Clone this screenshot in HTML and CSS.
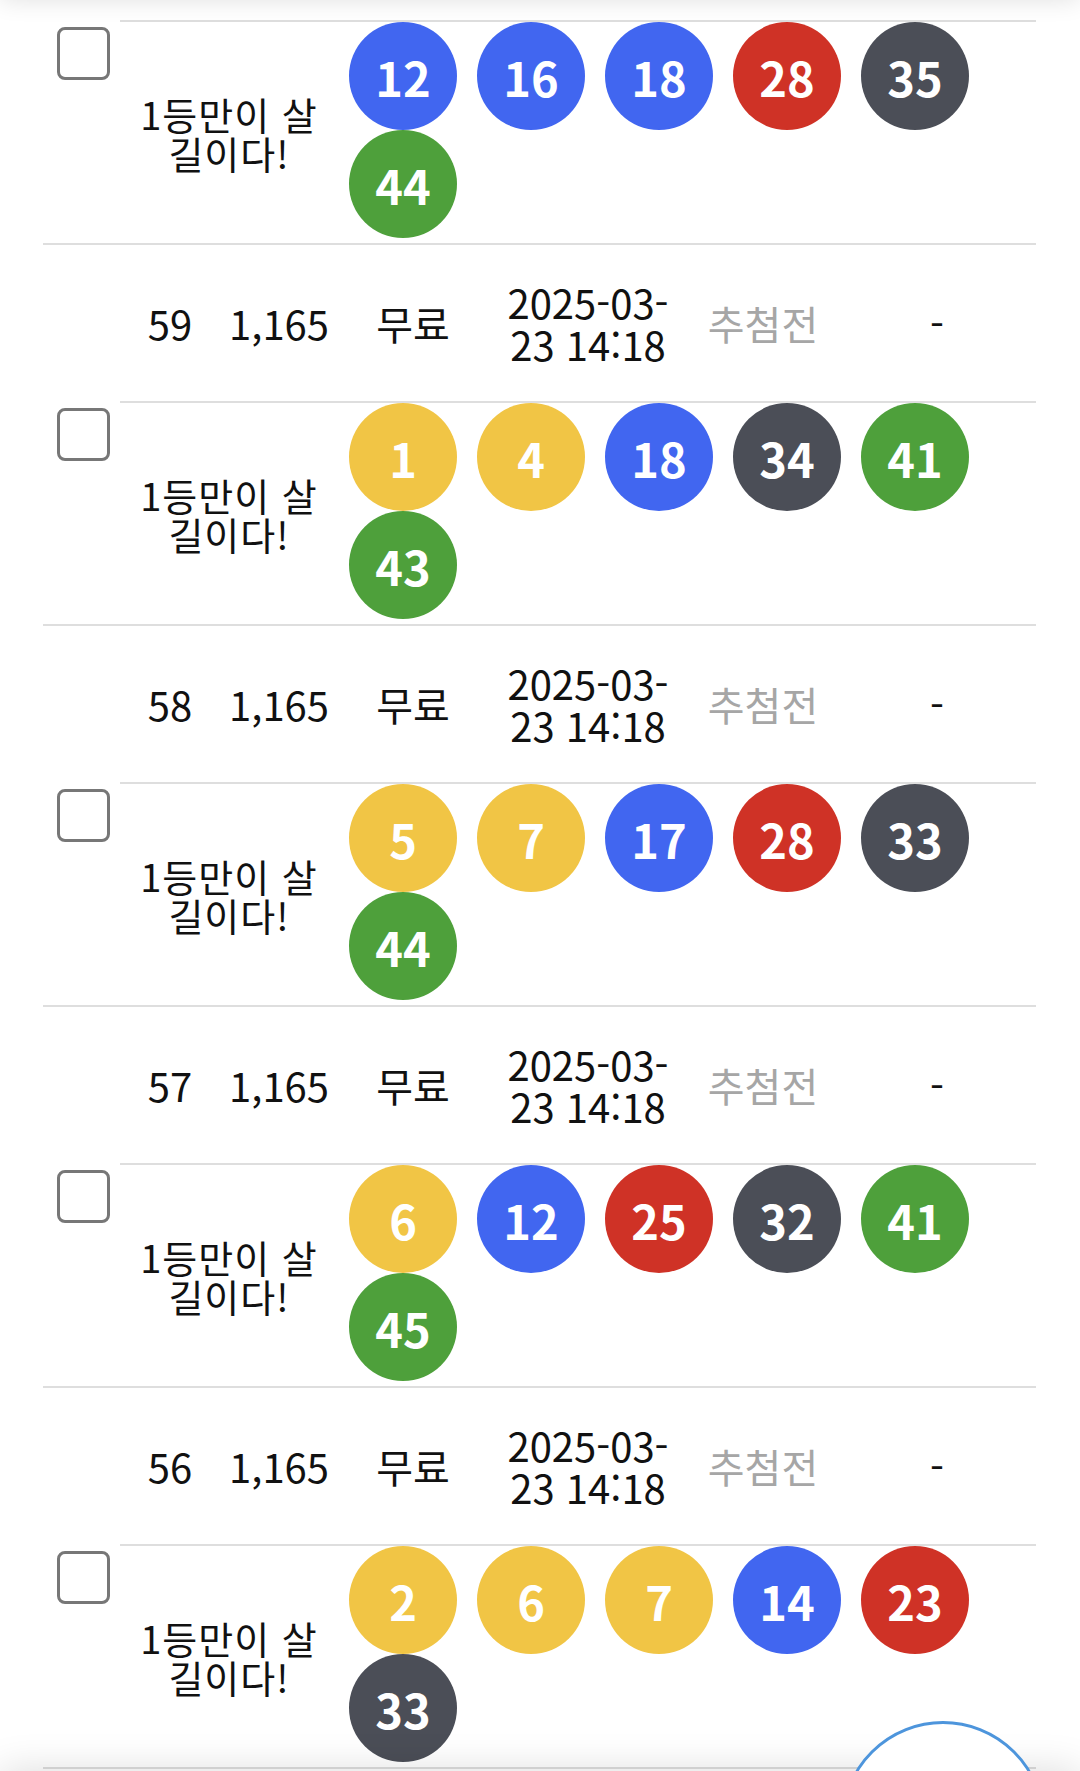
FILE: index.html
```html
<!DOCTYPE html>
<html lang="ko">
<head>
    <meta charset="UTF-8" />
    <meta name="viewport" content="width=device-width, initial-scale=1" />
    <title>구매 내역</title>
    <link rel="stylesheet" href="styles.css">
</head>
<body>
<div class="top-bar"></div>

<div class="list">
    <div class="entry">
        <div class="pick-row">
            <div class="chk"><input type="checkbox" /></div>
            <div class="memo">1등만이 살<br>길이다!</div>
            <div class="balls">
                <span class="ball blue">12</span>
                <span class="ball blue">16</span>
                <span class="ball blue">18</span>
                <span class="ball red">28</span>
                <span class="ball dark">35</span>
                <span class="ball green">44</span>
            </div>
        </div>
    </div>

    <div class="entry">
        <div class="info-row">
            <span></span>
            <span>59</span>
            <span>1,165</span>
            <span>무료</span>
            <span class="date">2025-03-<br>23 14:18</span>
            <span class="state">추첨전</span>
            <span>-</span>
        </div>
        <div class="pick-row">
            <div class="chk"><input type="checkbox" /></div>
            <div class="memo">1등만이 살<br>길이다!</div>
            <div class="balls">
                <span class="ball yellow">1</span>
                <span class="ball yellow">4</span>
                <span class="ball blue">18</span>
                <span class="ball dark">34</span>
                <span class="ball green">41</span>
                <span class="ball green">43</span>
            </div>
        </div>
    </div>

    <div class="entry">
        <div class="info-row">
            <span></span>
            <span>58</span>
            <span>1,165</span>
            <span>무료</span>
            <span class="date">2025-03-<br>23 14:18</span>
            <span class="state">추첨전</span>
            <span>-</span>
        </div>
        <div class="pick-row">
            <div class="chk"><input type="checkbox" /></div>
            <div class="memo">1등만이 살<br>길이다!</div>
            <div class="balls">
                <span class="ball yellow">5</span>
                <span class="ball yellow">7</span>
                <span class="ball blue">17</span>
                <span class="ball red">28</span>
                <span class="ball dark">33</span>
                <span class="ball green">44</span>
            </div>
        </div>
    </div>

    <div class="entry">
        <div class="info-row">
            <span></span>
            <span>57</span>
            <span>1,165</span>
            <span>무료</span>
            <span class="date">2025-03-<br>23 14:18</span>
            <span class="state">추첨전</span>
            <span>-</span>
        </div>
        <div class="pick-row">
            <div class="chk"><input type="checkbox" /></div>
            <div class="memo">1등만이 살<br>길이다!</div>
            <div class="balls">
                <span class="ball yellow">6</span>
                <span class="ball blue">12</span>
                <span class="ball red">25</span>
                <span class="ball dark">32</span>
                <span class="ball green">41</span>
                <span class="ball green">45</span>
            </div>
        </div>
    </div>

    <div class="entry">
        <div class="info-row">
            <span></span>
            <span>56</span>
            <span>1,165</span>
            <span>무료</span>
            <span class="date">2025-03-<br>23 14:18</span>
            <span class="state">추첨전</span>
            <span>-</span>
        </div>
        <div class="pick-row">
            <div class="chk"><input type="checkbox" /></div>
            <div class="memo">1등만이 살<br>길이다!</div>
            <div class="balls">
                <span class="ball yellow">2</span>
                <span class="ball yellow">6</span>
                <span class="ball yellow">7</span>
                <span class="ball blue">14</span>
                <span class="ball red">23</span>
                <span class="ball dark">33</span>
            </div>
        </div>
    </div>
</div>

<div class="bottom-bar"></div>
<button class="fab" type="button" aria-label="위로"></button>
</body>
</html>
```

FILE: styles.css
```css
:root {
    --line-color: #dedede;
    --text-color: #111;
    --muted-color: #a6a6a6;
    --ball-yellow: #f1c545;
    --ball-blue: #4166f0;
    --ball-red: #cf3226;
    --ball-dark: #4b4e57;
    --ball-green: #4ea03b;
}

body {
    font-family: "Noto Sans CJK KR", "Noto Sans", sans-serif;
    margin: 0;
    background-color: #fff;
    color: var(--text-color);
}

.top-bar {
    position: fixed;
    top: -60px;
    left: 0;
    right: 0;
    height: 60px;
    background-color: #fff;
    box-shadow: 0 0 24px rgba(0, 0, 0, 0.12);
    z-index: 5;
}

.list {
    width: 993px;
    margin: 0 0 0 43px;
    padding-top: 20px;
}

.entry {
    border-bottom: 2px solid var(--line-color);
}

/* 회차 / 금액 / 결제 / 일시 / 상태 / 당첨금 */
.info-row {
    display: grid;
    grid-template-columns: 77px 100px 118px 150px 200px 150px 198px;
    align-items: center;
    height: 156px;
    font-size: 40px;
    line-height: 42px;
    text-align: center;
}

.info-row .state {
    color: var(--muted-color);
}

.pick-row {
    display: grid;
    grid-template-columns: 77px 218px 698px;
}

.chk {
    padding: 7px 0 0 14px;
}

.chk input {
    -webkit-appearance: none;
    appearance: none;
    display: block;
    width: 53px;
    height: 53px;
    margin: 0;
    border: 3px solid #777;
    border-radius: 8px;
    background-color: #fff;
    box-sizing: border-box;
}

.memo {
    display: flex;
    align-items: center;
    justify-content: center;
    border-top: 2px solid var(--line-color);
    font-size: 38px;
    line-height: 39px;
    letter-spacing: 1px;
    text-align: center;
}

.balls {
    display: flex;
    flex-wrap: wrap;
    column-gap: 20px;
    padding: 0 0 5px 11px;
    border-top: 2px solid var(--line-color);
}

.ball {
    display: flex;
    align-items: center;
    justify-content: center;
    width: 108px;
    height: 108px;
    border-radius: 50%;
    color: #fff;
    font-size: 47px;
    font-weight: bold;
    line-height: 1;
}

.ball.yellow { background-color: var(--ball-yellow); }
.ball.blue { background-color: var(--ball-blue); }
.ball.red { background-color: var(--ball-red); }
.ball.dark { background-color: var(--ball-dark); }
.ball.green { background-color: var(--ball-green); }

.bottom-bar {
    position: fixed;
    bottom: -80px;
    left: 0;
    right: 0;
    height: 80px;
    background-color: #fff;
    box-shadow: 0 0 40px rgba(0, 0, 0, 0.14);
    z-index: 5;
}

.fab {
    position: fixed;
    left: 841px;
    top: 1721px;
    width: 204px;
    height: 204px;
    padding: 0;
    border: 3px solid #4d95dc;
    border-radius: 50%;
    background-color: #fff;
    z-index: 6;
}
```
